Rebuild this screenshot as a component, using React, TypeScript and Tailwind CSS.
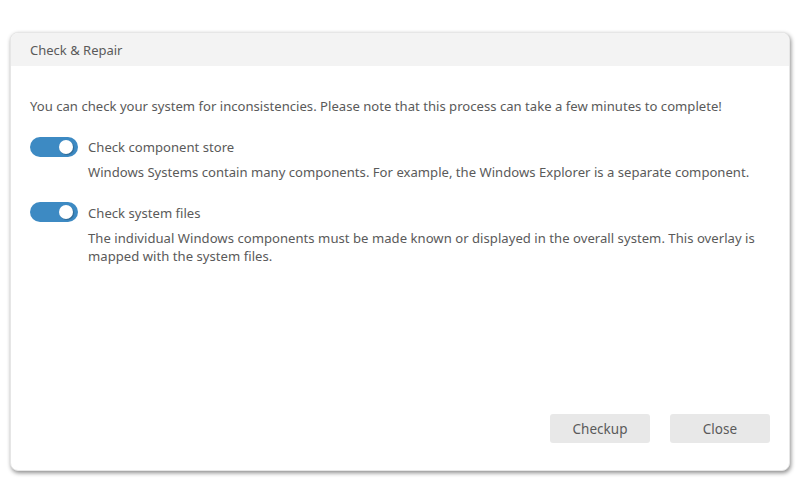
import React from "react";

function Toggle() {
  return (
    <div className="relative w-[48px] h-[20px] rounded-full bg-[#3d8ac3] shrink-0">
      <div className="absolute right-[5px] top-[3px] w-[14px] h-[14px] rounded-full bg-white shadow-[1px_1px_1px_rgba(0,0,0,0.25)]" />
    </div>
  );
}

export default function App() {
  return (
    <div
      className="w-[800px] h-[503px] bg-white pt-[32px] px-[10px]"
      style={{ fontFamily: '"Noto Sans", "Open Sans", sans-serif' }}
    >
      <div className="w-[780px] h-[439px] rounded-[8px] bg-white flex flex-col overflow-hidden shadow-[1px_2px_4px_rgba(0,0,0,0.45)] border border-[#e6e6e6]">
        <div className="h-[33px] bg-[#f3f3f3] flex items-center px-[19px] pt-[3px] text-[13px] text-[#5a5a5a]">
          Check &amp; Repair
        </div>
        <div className="flex-1 flex flex-col px-[19px] pt-[31px] text-[13.1px] tracking-[0.01px] text-[#5a5a5a] leading-[18px]">
          <p>You can check your system for inconsistencies. Please note that this process can take a few minutes to complete!</p>
          <div className="mt-[22px] flex gap-[10px]">
            <Toggle />
            <div className="flex flex-col gap-[7px] pt-[1px]">
              <div>Check component store</div>
              <div>Windows Systems contain many components. For example, the Windows Explorer is a separate component.</div>
            </div>
          </div>
          <div className="mt-[21px] flex gap-[10px]">
            <Toggle />
            <div className="flex flex-col gap-[7px] pt-[2px]">
              <div>Check system files</div>
              <div className="tracking-[0.03px]">The individual Windows components must be made known or displayed in the overall system. This overlay is mapped with the system files.</div>
            </div>
          </div>
          <div className="flex-1" />
          <div className="flex justify-end gap-[20px] pb-[27px]">
            <button className="w-[100px] h-[29px] rounded-[3px] bg-[#e8e8e8] text-[13.5px] text-[#5a5a5a]">Checkup</button>
            <button className="w-[100px] h-[29px] rounded-[3px] bg-[#e8e8e8] text-[13.5px] text-[#5a5a5a]">Close</button>
          </div>
        </div>
      </div>
    </div>
  );
}
